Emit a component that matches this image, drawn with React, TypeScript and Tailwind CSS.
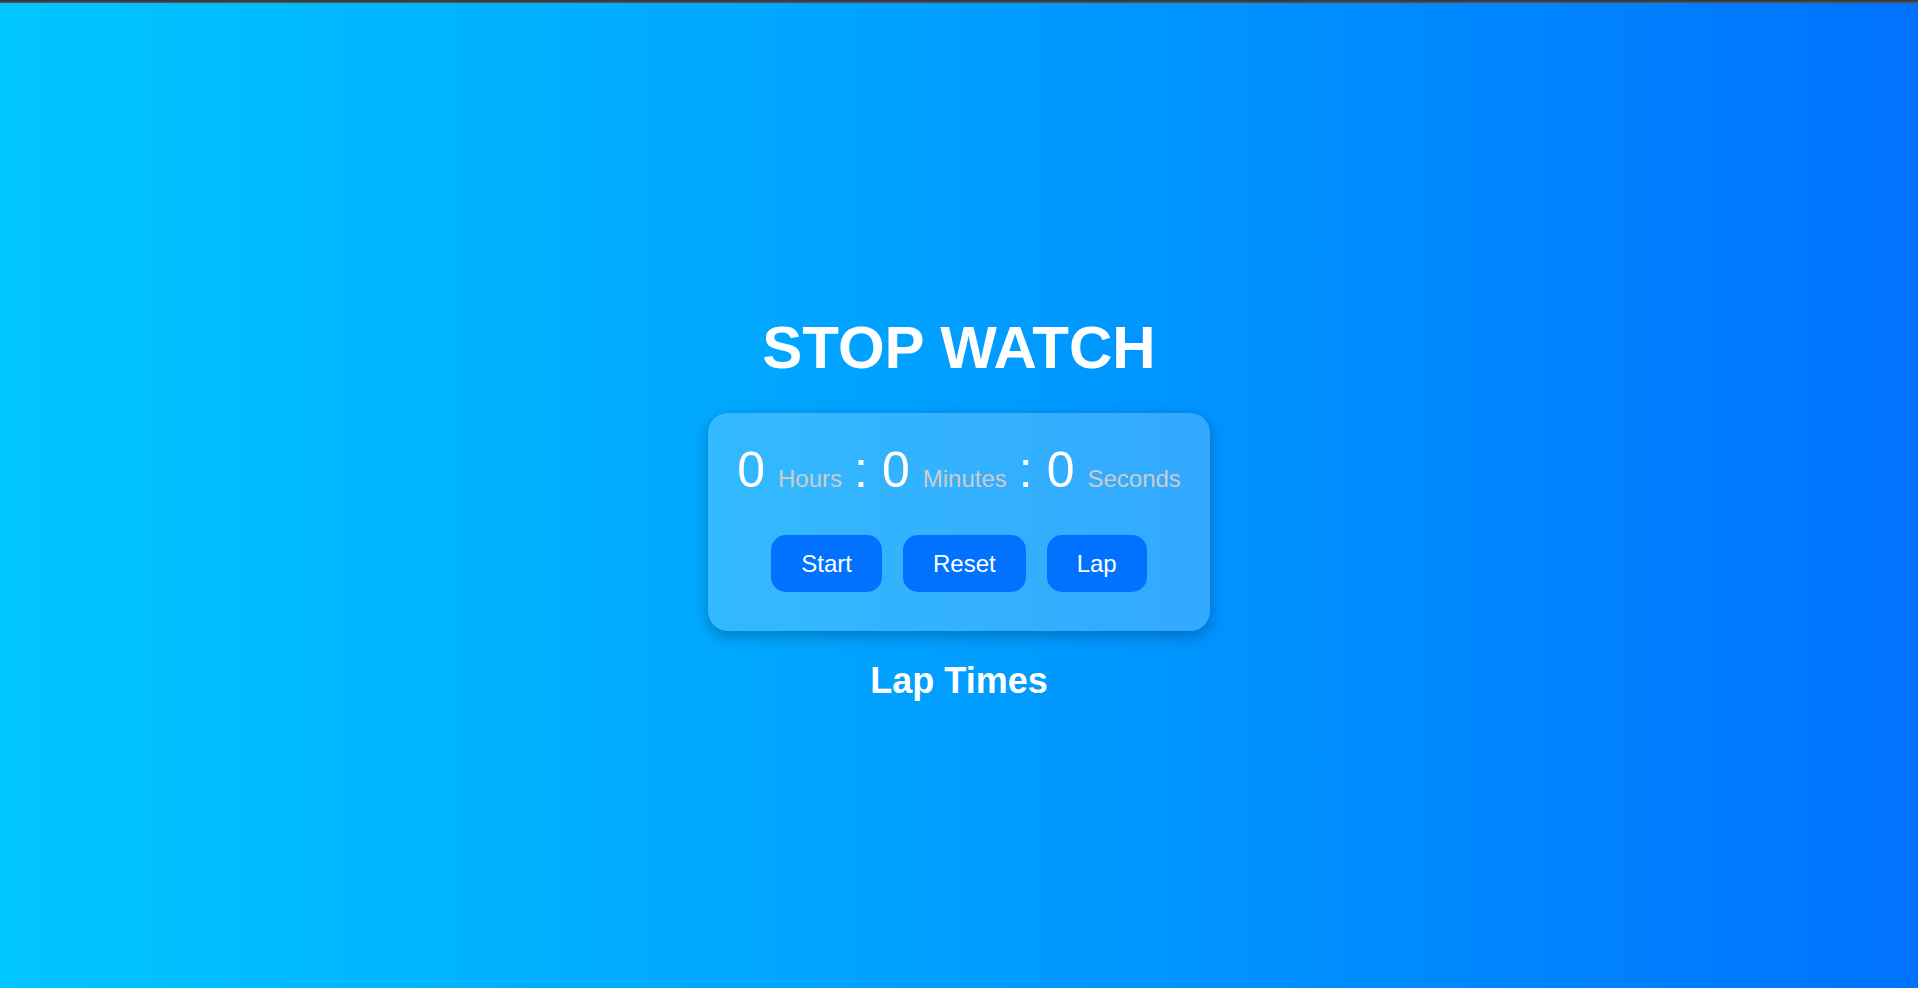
import { useState } from "react";

export default function App() {
  const [laps] = useState<string[]>([]);

  return (
    <div className="min-h-screen flex flex-col bg-gradient-to-r from-[#00c6ff] to-[#0072ff] font-['Liberation_Sans',Arial,sans-serif] text-white">
      <div className="h-[3px] bg-gradient-to-b from-[#333] to-[#555]" />
      <div className="flex flex-col items-center pt-[311px]">
        <h1 className="text-[60px] font-bold leading-[1.117]">STOP WATCH</h1>

        <div className="mt-[32px] w-[502px] h-[218px] rounded-[20px] bg-white/20 shadow-[0_5px_15px_rgba(0,0,0,0.25)] px-[30px] pt-[30px]">
          <div className="flex items-baseline justify-center leading-[1.117]">
            <span className="text-[50px]">0</span>
            <span className="ml-[13px] text-[24px] text-[#cccccc]">Hours</span>
            <span className="ml-[12px] mr-[14px] text-[50px]">:</span>
            <span className="text-[50px]">0</span>
            <span className="ml-[13px] text-[24px] text-[#cccccc]">Minutes</span>
            <span className="ml-[12px] mr-[14px] text-[50px]">:</span>
            <span className="text-[50px]">0</span>
            <span className="ml-[13px] text-[24px] text-[#cccccc]">Seconds</span>
          </div>

          <div className="mt-[36px] flex justify-center gap-[21px]">
            <button className="px-[30px] py-[15px] rounded-[15px] bg-[#0072ff] text-[24px] leading-[1.15]">
              Start
            </button>
            <button className="px-[30px] py-[15px] rounded-[15px] bg-[#0072ff] text-[24px] leading-[1.15]">
              Reset
            </button>
            <button className="px-[30px] py-[15px] rounded-[15px] bg-[#0072ff] text-[24px] leading-[1.15]">
              Lap
            </button>
          </div>
        </div>

        <h2 className="mt-[30px] text-[36px] font-bold leading-[1.117]">Lap Times</h2>
        <ul>
          {laps.map((l, i) => (
            <li key={i}>{l}</li>
          ))}
        </ul>
      </div>
    </div>
  );
}
